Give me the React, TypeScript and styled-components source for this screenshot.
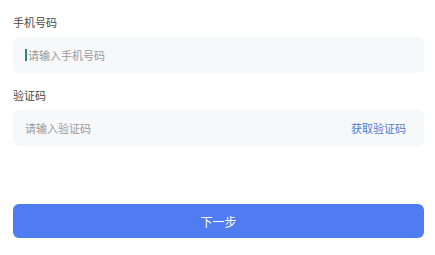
import React from 'react';
import styled, { createGlobalStyle } from 'styled-components';

const GlobalStyle = createGlobalStyle`
  body {
    margin: 0;
    background: #ffffff;
    font-family: "Noto Sans CJK SC", "Noto Sans", sans-serif;
  }
`;

const Form = styled.div`
  width: 435px;
  height: 255px;
  box-sizing: border-box;
  padding: 12px 11px 0 13px;
  display: flex;
  flex-direction: column;
`;

const Label = styled.div`
  font-size: 11px;
  line-height: 20px;
  color: #4a4a4a;
  margin-bottom: 5px;
`;

const Field = styled.div<{ $gap?: number }>`
  height: 36px;
  border-radius: 6px;
  background: #f7f8fa;
  display: flex;
  align-items: center;
  padding: 0 18px 0 12px;
  margin-bottom: ${(p) => p.$gap ?? 0}px;
`;

const Cursor = styled.span`
  width: 2px;
  height: 12px;
  background: #2c8a6a;
  margin-right: 1px;
`;

const Placeholder = styled.span`
  flex: 1;
  font-size: 11px;
  color: #9a9a9a;
`;

const CodeLink = styled.span`
  font-size: 11px;
  color: #4f7bd4;
`;

const Spacer = styled.div`
  height: 58px;
`;

const NextButton = styled.button`
  height: 34px;
  border: none;
  border-radius: 6px;
  background: #4f7cf0;
  color: #ffffff;
  font-family: inherit;
  font-size: 12px;
  padding: 0;
`;

export default function App() {
  return (
    <>
      <GlobalStyle />
      <Form>
        <Label>手机号码</Label>
        <Field $gap={12}>
          <Cursor />
          <Placeholder>请输入手机号码</Placeholder>
        </Field>
        <Label>验证码</Label>
        <Field>
          <Placeholder>请输入验证码</Placeholder>
          <CodeLink>获取验证码</CodeLink>
        </Field>
        <Spacer />
        <NextButton>下一步</NextButton>
      </Form>
    </>
  );
}
